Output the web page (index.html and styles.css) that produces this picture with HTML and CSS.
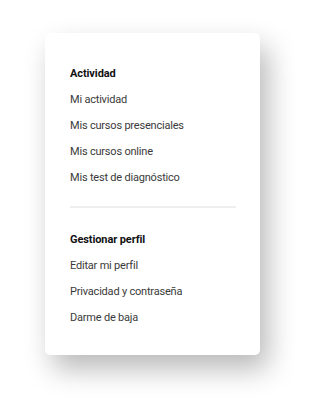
FILE: index.html
```html
<!DOCTYPE html>
<html lang="es">
<head>
<meta charset="utf-8">
<link rel="stylesheet" href="styles.css">
</head>
<body>
<nav class="menu">
  <section class="group">
    <h3 class="title">Actividad</h3>
    <a class="item" href="#">Mi actividad</a>
    <a class="item" href="#">Mis cursos presenciales</a>
    <a class="item" href="#">Mis cursos online</a>
    <a class="item" href="#">Mis test de diagnóstico</a>
  </section>
  <hr class="divider">
  <section class="group">
    <h3 class="title">Gestionar perfil</h3>
    <a class="item" href="#">Editar mi perfil</a>
    <a class="item" href="#">Privacidad y contraseña</a>
    <a class="item" href="#">Darme de baja</a>
  </section>
</nav>
</body>
</html>
```
FILE: styles.css
```css
html, body {
  margin: 0;
  padding: 0;
  background: #ffffff;
}
body {
  min-height: 100vh;
  box-sizing: border-box;
  padding: 33px 0 0 45px;
  font-family: Roboto, "Liberation Sans", sans-serif;
}
.menu {
  width: 215px;
  height: 322px;
  box-sizing: border-box;
  background: #fff;
  border-radius: 5px;
  box-shadow: 8px 14px 28px rgba(0, 0, 0, 0.28);
  padding: 28px 24px 25px 25px;
}
.group {
  display: flex;
  flex-direction: column;
}
.title {
  margin: 0;
  font-size: 11px;
  font-weight: 700;
  line-height: 26px;
  letter-spacing: -0.1px;
  color: #111;
}
.item {
  font-size: 11px;
  line-height: 26px;
  letter-spacing: -0.2px;
  color: #3a3a3a;
  text-decoration: none;
}
.divider {
  border: 0;
  height: 2px;
  background: #eeeeee;
  margin: 15px 0 19px 0;
}
```
